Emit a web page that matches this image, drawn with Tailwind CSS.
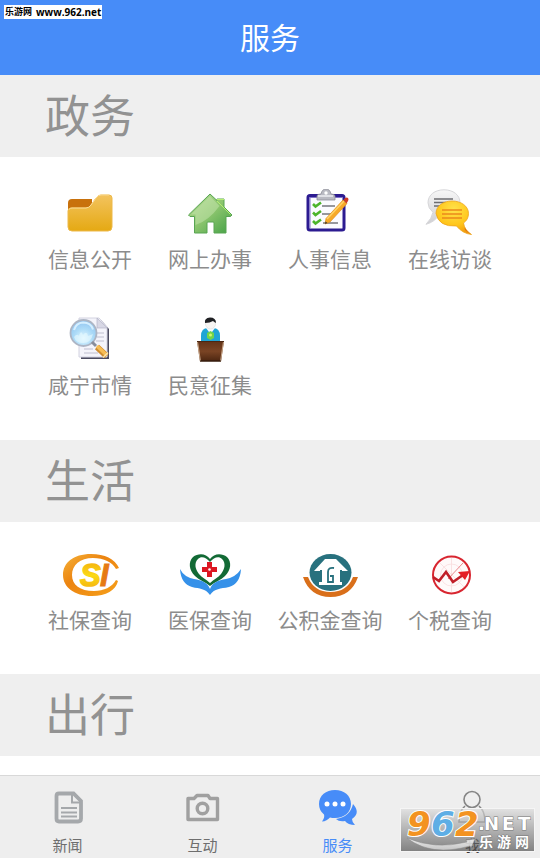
<!DOCTYPE html>
<html lang="zh-CN">
<head>
    <meta charset="UTF-8">
    <meta name="viewport" content="width=device-width, initial-scale=1.0">
    <title>服务</title>
    <script src="https://cdn.jsdelivr.net/npm/@tailwindcss/browser@4"></script>
</head>
<body class="bg-white font-['Noto_Sans_CJK_SC',sans-serif] text-[#8c8c8c]">
    <div class="relative flex min-h-screen flex-col">
        <!-- 顶部标题 -->
        <header class="flex h-[75px] items-center justify-center bg-[#478cf8] pb-1">
            <h1 class="text-[30px] leading-10 text-white">服务</h1>
        </header>
        <div class="absolute left-1 top-[5px] flex h-[14px] items-center gap-1 bg-white px-px font-['Open_Sans','Noto_Sans_CJK_SC',sans-serif] text-[9px] font-bold leading-3 text-black">
            <span>乐游网</span><span class="text-[10px]">www.962.net</span>
        </div>

        <main class="flex-1">
            <!-- 政务 -->
            <section>
                <h2 class="flex h-[82px] items-center bg-[#efefef] px-[45px] pb-[6px] text-[45px] leading-none text-[#929292]">政务</h2>
                <div class="grid grid-cols-4 gap-y-[43px] px-[30px] pb-[42px] pt-8">
                    <a href="#" class="flex flex-col items-center gap-[7px]">
                        <svg class="h-12 w-[72px]" viewBox="0 0 72 48">
                            <defs>
                                <linearGradient id="folder" x1="0" y1="0" x2="0" y2="1"><stop offset="0" stop-color="#f3c35e"/><stop offset="1" stop-color="#e5a913"/></linearGradient>
                            </defs>
                            <path d="M14 14q0-4 4-4h20v12H14z" fill="#c8710c"/>
                            <path d="M14 22q0-3 3-3h15q3 0 5-3l5-7q2-3 5-3h8q3 0 3 3v29q0 4-4 4H18q-4 0-4-4z" fill="url(#folder)" stroke="#edb94a"/>
                            <path d="M15 20.500q1-1.500 3-1.500h14q3 0 5-3l5-7q2-3 5-3h8" fill="none" stroke="#fbdc96"/>
                        </svg>
                        <span class="whitespace-nowrap text-[21px] leading-7">信息公开</span>
                    </a>
                    <a href="#" class="flex flex-col items-center gap-[7px]">
                        <svg class="h-12 w-[72px]" viewBox="0 0 72 48">
                            <defs>
                                <linearGradient id="house" x1="0" y1="0" x2="1" y2="1"><stop offset="0" stop-color="#b5dc94"/><stop offset=".5" stop-color="#8cc56e"/><stop offset="1" stop-color="#42a045"/></linearGradient>
                            </defs>
                            <path d="M36 5 14.500 26l1.500 1.500h4.500V44H33V34q0-1 1-1h5q1 0 1 1v10h12V27.500h4.500L58 26l-8-8v-8h-7v1.500z" fill="url(#house)" stroke="#58a553" stroke-linejoin="round"/>
                            <path d="M36 7 17 25.500h4.500V36q13-4 24-19z" fill="#d5edc0" opacity=".4"/>
                            <path d="m43 12 13.500 13.500M43 10.500h7" stroke="#b6ef71" fill="none"/>
                        </svg>
                        <span class="whitespace-nowrap text-[21px] leading-7">网上办事</span>
                    </a>
                    <a href="#" class="flex flex-col items-center gap-[7px]">
                        <svg class="h-12 w-[72px]" viewBox="0 0 72 48">
                            <rect x="14" y="6.500" width="36" height="34.500" rx="2" fill="#fbfbff" stroke="#2c1b91" stroke-width="3"/>
                            <path d="M16 39V8.500h32" fill="none" stroke="#8174c8"/>
                            <path d="M23 11V7q0-2 4-2 1-5 5-5t5 5q4 0 4 2v4z" fill="#b9bac2" stroke="#8e8f99" stroke-width=".8"/>
                            <circle cx="32" cy="4" r="1.700" fill="#fff"/>
                            <path d="M24 7h15" stroke="#eeeef2" stroke-width="1.500"/>
                            <g fill="none" stroke="#4db52c" stroke-width="2.600"><path d="m19 15 2.500 2.500L27 13.500M19 23.500l2.500 2.500 5.500-4M19 32l2.500 2.500 5.500-4"/></g>
                            <path d="M28 17h13M28 25h10M29 34h15" stroke="#77777e" stroke-width="1.500"/>
                            <path d="m31 35 1-5.500L49 11l4 3.500L36 33z" fill="#f7a928" stroke="#e08e1e" stroke-width=".7"/>
                            <path d="m33 30 17-18" stroke="#ffd367" stroke-width="1.500"/>
                            <path d="m49.500 11 1.500-2q2-1 3 0t0 3l-1.500 2.500z" fill="#cf3b25"/>
                            <path d="m31 35 .5-2.600 2 1.600z" fill="#333"/>
                        </svg>
                        <span class="whitespace-nowrap text-[21px] leading-7">人事信息</span>
                    </a>
                    <a href="#" class="flex flex-col items-center gap-[7px]">
                        <svg class="h-12 w-[72px]" viewBox="0 0 72 48">
                            <defs>
                                <radialGradient id="talk" cx=".5" cy=".25" r=".8"><stop offset="0" stop-color="#ffe24a"/><stop offset=".6" stop-color="#ffc51a"/><stop offset="1" stop-color="#ef930c"/></radialGradient>
                                <linearGradient id="talk2" x1="0" y1="0" x2="0" y2="1"><stop offset="0" stop-color="#f7f7f7"/><stop offset="1" stop-color="#cfcfd3"/></linearGradient>
                            </defs>
                            <path d="M30 .8c9 0 16 5 16 13s-7 13-16 13q-3 0-5-1-4 7-13 9.500 6-6 7-12-5-4-5-9.500c0-8 7-13 16-13z" fill="url(#talk2)" stroke="#d6d6d9"/>
                            <path d="M20 10h19M20 13.500h12M20 17h7" stroke="#6d6d72" stroke-width="1.500"/>
                            <path d="M38 12c9 0 16.500 5 16.500 12.500q0 6-5 9.500 1 7 8 11.500-9-1-15-8.500-18 1-20.500-12.500C22 17 29 12 38 12z" fill="url(#talk)" stroke="#eea41c" stroke-width=".8"/>
                            <path d="m51 41 6 4.500q-4-3-6.500-7z" fill="#d96b18"/>
                            <path d="M28 21h20M28 25h20M28 29h20" stroke="#eb891b" stroke-width="1.700"/>
                        </svg>
                        <span class="whitespace-nowrap text-[21px] leading-7">在线访谈</span>
                    </a>
                    <a href="#" class="flex flex-col items-center gap-[7px]">
                        <svg class="h-12 w-[72px]" viewBox="0 0 72 48">
                            <defs>
                                <radialGradient id="lens" cx=".5" cy=".7" r=".7"><stop offset="0" stop-color="#e2f7ff"/><stop offset=".5" stop-color="#aedcf8"/><stop offset="1" stop-color="#8fc3f0"/></radialGradient>
                            </defs>
                            <path d="M27 44V5h20l8 9v30z" fill="#4b4b60"/>
                            <path d="M25 42V3h20l8 9v30z" fill="#f4f4fb" stroke="#d2d2e0"/>
                            <path d="M43 3v10h10z" fill="#d8d8e5" stroke="#b5b5c8" stroke-width=".7"/>
                            <path d="M43 18h7M43 22h7M42 26h8M30 34h9M30 38h14" stroke="#d0d0de" stroke-width="1.500"/>
                            <circle cx="29.500" cy="18" r="13" fill="url(#lens)" stroke="#adb5c4" stroke-width="1.800"/>
                            <path d="M20 15q2-7 9-7.500 8 0 10 7" fill="none" stroke="#d5efff" stroke-width="2"/>
                            <path d="M20 22q3-4 5-1 2-7 4-1 4-5 5 1l5-2q-2 9-10 9-7 0-9-6z" fill="#e8faff" opacity=".6"/>
                            <path d="m38 27 4 4" stroke="#888d9b" stroke-width="3"/>
                            <path d="m43 32 9.500 9" stroke="#cf8d31" stroke-width="6"/>
                            <path d="m43 31 10 9.500" stroke="#f7bd55" stroke-width="3.500"/>
                            <path d="m49 42.500 5-5" stroke="#fbe5ae" stroke-width="1.500"/>
                        </svg>
                        <span class="whitespace-nowrap text-[21px] leading-7">咸宁市情</span>
                    </a>
                    <a href="#" class="flex flex-col items-center gap-[7px]">
                        <svg class="h-12 w-[72px]" viewBox="0 0 72 48">
                            <defs>
                                <linearGradient id="desk" x1="0" y1="0" x2="0" y2="1"><stop offset="0" stop-color="#613217"/><stop offset=".5" stop-color="#7a4424"/><stop offset="1" stop-color="#4b2510"/></linearGradient>
                            </defs>
                            <path d="M27 26v-5q0-8 7-8h5q7 0 7 8v5z" fill="#20a5d5"/>
                            <path d="m32 13 4.500 6 4.500-6z" fill="#f5fbff"/>
                            <circle cx="36.500" cy="9" r="5" fill="#f7f5f3" stroke="#dedbd8" stroke-width=".6"/>
                            <path d="M31 8q-1-5 5-5.500 6 0 6 5.500-2-1-3-2-3 2-8 2z" fill="#202124"/>
                            <path d="m33 18 3.500-2 3.500 2v5l-3.500 2-3.500-2z" fill="#70d44b"/>
                            <circle cx="36.500" cy="20" r="1.500" fill="#d5f66d"/>
                            <path d="M23 26h27l-3 20.500H26z" fill="url(#desk)"/>
                            <path d="m23.500 26.500 3 20M49.500 26.500l-3 20" stroke="#c9a88b" fill="none"/>
                            <path d="M23 26.500h27" stroke="#4b2713"/>
                            <path d="M26 46h21" stroke="#29150b"/>
                        </svg>
                        <span class="whitespace-nowrap text-[21px] leading-7">民意征集</span>
                    </a>
                </div>
            </section>

            <!-- 生活 -->
            <section>
                <h2 class="flex h-[82px] items-center bg-[#efefef] px-[45px] pb-[6px] text-[45px] leading-none text-[#929292]">生活</h2>
                <div class="grid grid-cols-4 px-[30px] pb-[41px] pt-7">
                    <a href="#" class="flex flex-col items-center gap-[7px]">
                        <svg class="h-12 w-[72px]" viewBox="0 0 72 48">
                            <defs>
                                <linearGradient id="ring" x1="0" y1="0" x2="1" y2="1"><stop offset="0" stop-color="#f5b339"/><stop offset=".4" stop-color="#ec8410"/><stop offset="1" stop-color="#f6a01a"/></linearGradient>
                                <linearGradient id="letter" x1="0" y1="0" x2="0" y2="1"><stop offset="0" stop-color="#f3a80c"/><stop offset=".5" stop-color="#fbd916"/><stop offset="1" stop-color="#f2a70c"/></linearGradient>
                            </defs>
                            <path d="M65 18Q58 4 37 4C19 4 9 13 9 25s11 21 29 21c14 0 24-6 26-15l-2-1c-4 7-12 11-22 11-14 0-22-6-22-16S26 8 39 8c11 0 19 4 23 11z" fill="url(#ring)"/>
                            <text x="26" y="36" font-family="Liberation Sans, sans-serif" font-size="31" font-weight="bold" font-style="italic" fill="url(#letter)" stroke="url(#letter)" stroke-width="1.500">S</text>
                            <text x="46" y="36" font-family="Liberation Sans, sans-serif" font-size="31" font-weight="bold" font-style="italic" fill="#e67a13" stroke="#e67a13">I</text>
                        </svg>
                        <span class="whitespace-nowrap text-[21px] leading-7">社保查询</span>
                    </a>
                    <a href="#" class="flex flex-col items-center gap-[7px]">
                        <svg class="h-12 w-[72px]" viewBox="0 0 72 48">
                            <path d="M36 9C32 3 24 3 19 7c-5 5-4 13 2 19 4 4 10 6 15 10 5-4 11-6 15-10 6-6 7-14 2-19-5-4-13-4-17 2zm0 3c4-5 9-6 12-3 4 4 3 10-1 15-3 4-7 5-11 9-4-4-8-5-11-9-4-5-5-11-1-15 3-3 8-2 12 3z" fill="#126a35" fill-rule="evenodd"/>
                            <path d="M33 12h5v5h5v5h-5v5h-5v-5h-5v-5h5z" fill="#dc1722"/>
                            <circle cx="35.500" cy="19.500" r="1.300" fill="#fff"/>
                            <path d="M6 19q4 8 14 10c8 1 14 4 16 10 2-6 8-9 16-10q10-2 15-10-1 15-12 18c-9 2-14 1-19 8-5-7-10-6-18-8Q7 34 6 19z" fill="#3591e9"/>
                        </svg>
                        <span class="whitespace-nowrap text-[21px] leading-7">医保查询</span>
                    </a>
                    <a href="#" class="flex flex-col items-center gap-[7px]">
                        <svg class="h-12 w-[72px]" viewBox="0 0 72 48">
                            <path d="M9 27h5q6 15 22.500 15T59 27h5Q57 47 36.500 47T9 27z" fill="#d96f1a"/>
                            <ellipse cx="36.500" cy="22.500" rx="21" ry="18.500" fill="#28717e"/>
                            <path d="M31 9h11l12 12h-6v-1h-2v12h2v3H25v-3h3V20h-2v1h-6z" fill="#fff"/>
                            <path d="M40 18q-6-1-6 4v10h5v-6h-3" fill="none" stroke="#28717e" stroke-width="1.800"/>
                        </svg>
                        <span class="whitespace-nowrap text-[21px] leading-7">公积金查询</span>
                    </a>
                    <a href="#" class="flex flex-col items-center gap-[7px]">
                        <svg class="h-12 w-[72px]" viewBox="0 0 72 48">
                            <circle cx="37.500" cy="25" r="18.500" fill="#fffafa" stroke="#d82630" stroke-width="2"/>
                            <g fill="none" stroke="#f9dcdd" stroke-width=".8"><circle cx="37.500" cy="25" r="11"/><path d="M37.500 8v34M26 13l24 24"/></g>
                            <path d="m34 29 15-16" stroke="#e9898d" stroke-width="1"/>
                            <path d="m19 27 6 4 7-9 7 10 10-7" fill="none" stroke="#c11f29" stroke-width="2.600"/>
                            <path d="m44 22 12-1-5 9z" fill="#e51e26"/>
                        </svg>
                        <span class="whitespace-nowrap text-[21px] leading-7">个税查询</span>
                    </a>
                </div>
            </section>

            <!-- 出行 -->
            <section>
                <h2 class="flex h-[82px] items-center bg-[#efefef] px-[45px] pb-[6px] text-[45px] leading-none text-[#929292]">出行</h2>
            </section>
        </main>

        <!-- 底部导航 -->
        <nav class="grid grid-cols-4 border-t border-[#d8d8d8] bg-[#eeeeee] pb-[3px] pt-[11px] text-[15px] leading-5 text-[#6e6e6e]">
            <a href="#" class="flex flex-col items-center gap-2">
                <svg class="size-10" viewBox="0 0 40 40" fill="none" stroke="#a5a8ab">
                    <path d="M11 6.500h14.500L33 14v17.500q0 3-3 3H11q-2.500 0-2.500-3V9q0-2.500 2.500-2.500z" stroke-width="3.800"/>
                    <path d="M24 7v8.500h9" stroke-width="2"/>
                    <path d="M13 21h16M13 25.500h16M13 29.500h16" stroke-width="2"/>
                </svg>
                <span>新闻</span>
            </a>
            <a href="#" class="flex flex-col items-center gap-2">
                <svg class="size-10" viewBox="0 0 40 40" fill="none" stroke="#a0a0a0" stroke-width="3.400" stroke-linejoin="round">
                    <path d="M5 11.500h6l3-3h11l2 3h7.500v21H5z"/>
                    <circle cx="19.500" cy="21.500" r="5.300"/>
                </svg>
                <span>互动</span>
            </a>
            <a href="#" class="flex flex-col items-center gap-2 text-[#478cf8]" aria-current="page">
                <svg class="size-10" viewBox="0 0 40 40">
                    <path d="M35 17q8 9-1 15 0 3 3 6-7 0-10-4-6 1-9-2 14-2 17-15z" fill="#478cf8"/>
                    <path d="M17 3c9 0 16 5.500 16 14s-7 14-16 14q-3 0-5-.6Q9 34 4 34.500q3-4 2-7-5-4-5-10.500C1 8.500 8 3 17 3z" fill="#478cf8"/>
                    <g fill="#fff"><circle cx="9" cy="17" r="2.500"/><circle cx="17" cy="17" r="2.500"/><circle cx="25" cy="17" r="2.500"/></g>
                </svg>
                <span>服务</span>
            </a>
            <a href="#" class="flex flex-col items-center gap-2 text-[#333333]">
                <svg class="size-10" viewBox="0 0 40 40" fill="none" stroke="#858585" stroke-width="1.600">
                    <circle cx="19" cy="12.500" r="8"/>
                    <path d="M12 19q-6 5-6 16h26q0-11-6-16"/>
                </svg>
                <span>我</span>
            </a>
        </nav>

        <!-- 水印 -->
        <svg class="absolute bottom-[6px] right-[5px] h-[50px] w-[135px]" viewBox="0 -6 135 50" role="img" aria-label="962.NET 乐游网">
            <defs>
                <linearGradient id="mark" x1="0" y1="0" x2="0" y2="1"><stop offset="0" stop-color="#dcdcdc"/><stop offset="1" stop-color="#4e4e4e"/></linearGradient>
                <linearGradient id="swoosh" x1="0" y1="0" x2="0" y2="1"><stop offset="0" stop-color="#fff"/><stop offset="1" stop-color="#d5d5d5"/></linearGradient>
            </defs>
            <rect x=".5" y=".5" width="134" height="43" fill="url(#mark)" fill-opacity=".68" stroke="#f5f5f5"/>
            <path d="M7 30q28 12 60 4l-1-2 9-1-4 9-1-2Q31 49 7 30z" fill="url(#swoosh)" fill-opacity=".8" stroke="#8a8a8a" stroke-width=".5"/>
            <g font-family="DejaVu Sans, sans-serif" font-size="34" font-weight="bold" font-style="italic" stroke="#fff" stroke-width="2" paint-order="stroke">
                <text x="7" y="28" fill="#f39321">9</text>
                <text x="31" y="28" fill="#5eaee5">6</text>
                <text x="55" y="28" fill="#f39321">2</text>
            </g>
            <g fill="#fff" stroke="#777" stroke-width="1" paint-order="stroke" font-weight="bold">
                <text x="78" y="22" font-family="DejaVu Sans, sans-serif" font-size="18">.</text>
                <text x="84" y="22" font-family="DejaVu Sans, sans-serif" font-size="18">N</text>
                <text x="102" y="22" font-family="DejaVu Sans, sans-serif" font-size="18">E</text>
                <text x="118" y="22" font-family="DejaVu Sans, sans-serif" font-size="18">T</text>
                <text x="79" y="39" font-family="Noto Sans CJK SC, sans-serif" font-size="14">乐</text>
                <text x="97" y="39" font-family="Noto Sans CJK SC, sans-serif" font-size="14">游</text>
                <text x="115" y="39" font-family="Noto Sans CJK SC, sans-serif" font-size="14">网</text>
            </g>
        </svg>
    </div>
</body>
</html>
